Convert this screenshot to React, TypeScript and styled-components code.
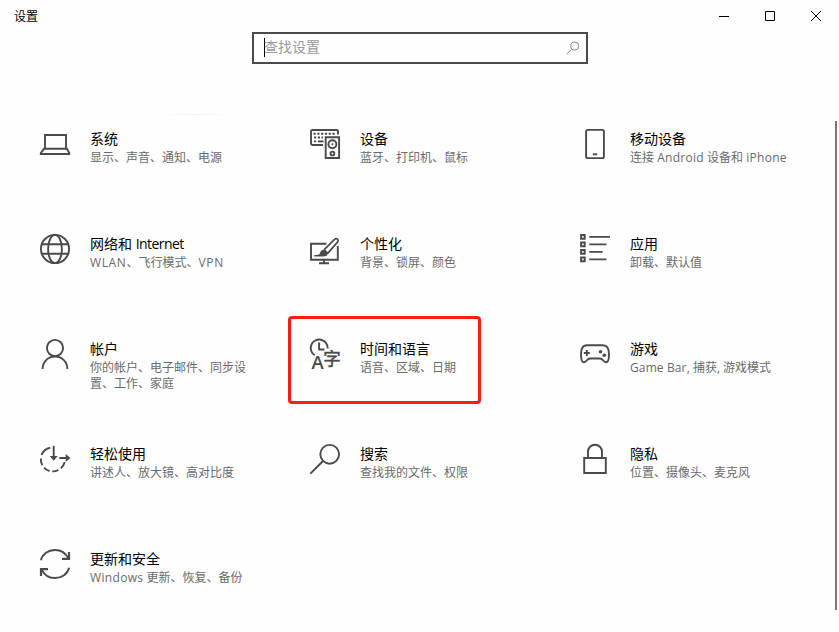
import React from "react";
import styled, { createGlobalStyle } from "styled-components";

const GlobalStyle = createGlobalStyle`
  * { box-sizing: border-box; }
  body { margin: 0; background: #fefefe; }
`;

const Window = styled.div`
  width: 839px;
  height: 632px;
  display: flex;
  flex-direction: column;
  overflow: hidden;
  background: #fefefe;
  color: #000;
  font-family: "Open Sans", "Noto Sans CJK SC", sans-serif;
`;

const TitleBar = styled.header`
  height: 32px;
  flex: none;
  display: flex;
  justify-content: space-between;
  padding-left: 14px;
`;

const WindowTitle = styled.h1`
  margin: 0;
  font-size: 12px;
  font-weight: 400;
  line-height: 33px;
`;

const Controls = styled.div`
  display: flex;
`;

const ControlButton = styled.button`
  width: 46px;
  height: 32px;
  border: 0;
  padding: 0;
  background: none;
  display: grid;
  place-items: center;
`;

const SearchBox = styled.label`
  width: 336px;
  height: 32px;
  flex: none;
  margin-left: 252px;
  border: 2px solid #4c4a48;
  padding: 0 6px 0 10px;
  display: flex;
  align-items: center;
`;

const Caret = styled.span`
  width: 1px;
  height: 19px;
  margin: 0 -1px 2px 0;
  background: #000;
`;

const Placeholder = styled.span`
  flex: 1;
  font-size: 14px;
  line-height: 20px;
  padding-bottom: 3px;
  color: #999;
`;

const FadeLine = styled.div`
  width: 70px;
  height: 1px;
  flex: none;
  margin: 50px 0 0 160px;
  background: linear-gradient(to right, transparent, #f0f0f0, transparent);
`;

const Content = styled.main`
  flex: 1;
  min-height: 0;
  display: flex;
  justify-content: space-between;
  padding: 6px 2px 0 39px;
`;

const CategoryGrid = styled.div`
  display: grid;
  grid-template-columns: repeat(3, 270px);
  grid-auto-rows: 105px;
  width: 796px;
  padding-top: 7px;
`;

const ScrollThumb = styled.div`
  width: 2px;
  height: 489px;
  flex: none;
  background: #767676;
`;

const Card = styled.section`
  position: relative;
  display: flex;
  gap: 19px;
  align-items: flex-start;
`;

const Highlight = styled.div`
  position: absolute;
  left: -21px;
  top: -22px;
  width: 193px;
  height: 88px;
  border: 3px solid #ff1c12;
  border-radius: 4px;
`;

const IconFrame = styled.svg`
  width: 32px;
  height: 32px;
  flex: none;
  overflow: visible;
  fill: none;
  stroke: #4a4a4a;
  stroke-width: 1.9;
`;

const CardText = styled.div`
  width: 162px;
  padding-top: 1px;
`;

const CardTitle = styled.h2`
  margin: 0;
  font-size: 14px;
  line-height: 20px;
  font-weight: 400;
  white-space: nowrap;
`;

const Description = styled.p`
  margin: 1px 0 0;
  font-size: 12px;
  line-height: 16px;
  color: #6a6a6a;
`;

const Latin = styled.span<{ $track: number }>`
  letter-spacing: ${(p) => p.$track}px;
`;

const GlyphText = styled.text<{ $size: number; $weight: number; $outline: number }>`
  font-family: "Open Sans", "Noto Sans CJK SC", sans-serif;
  font-size: ${(p) => p.$size}px;
  font-weight: ${(p) => p.$weight};
  fill: #4a4a4a;
  stroke-width: ${(p) => p.$outline}px;
`;

const icons: Record<string, React.ReactNode> = {
  system: (
    <path d="M6 20.5V7h21v13.5M5 20.8h23l2.2 4.2v1H1.8v-1z" />
  ),
  devices: (
    <>
      <path d="M29 6.5V3.5A1.5 1.5 0 0 0 27.5 2h-24A1.5 1.5 0 0 0 2 3.5v12A1.5 1.5 0 0 0 3.5 17H14" />
      <path d="M4.5 5.8H27M5 9.5h9M5 13.4h2.5" strokeDasharray="2.2 1.6" />
      <path d="M9 13.4h5.5" />
      <path d="M16.7 9.3h13.4V30H16.700z" />
      <circle cx="23.4" cy="16.3" r="4" />
      <circle cx="23.4" cy="16.3" r="1" fill="#4a4a4a" stroke="none" />
      <circle cx="23.4" cy="25.5" r="1.9" />
    </>
  ),
  phone: (
    <>
      <rect x="7.1" y="1.9" width="17.8" height="28.2" rx="1.6" />
      <path d="M13.8 26.3h4.4" />
    </>
  ),
  network: (
    <>
      <circle cx="16" cy="16" r="14.1" />
      <ellipse cx="16" cy="16" rx="6.9" ry="14.1" />
      <path d="M2.7 11.3h26.600M2.7 20.7h26.600" />
    </>
  ),
  personal: (
    <>
      <path d="M17.5 10.7H2v16h26.800V13M15 27v3M10 30.200h10" />
      <path d="M15 16.800L25.800 6.200c1.800-1.600 4.400.800 2.900 2.700L18.700 20.400M15 16.800l3.700 3.600" strokeWidth="1.7" />
      <path d="M15.300 16.800c-2.500 0-3.800 1.200-4.200 3.200-.3 1.400-1.600 2-5.800 2v1.500h8.600c3 0 4.900-1 5-3.400z" fill="#4a4a4a" stroke="none" />
    </>
  ),
  apps: (
    <>
      <path d="M2.100 2.100h3.600v3.600H2.100zM2.100 9.600h3.600v3.600H2.100zM2.100 17.100h3.600v3.600H2.100zM2.100 24.600h3.600v3.600H2.100z" strokeWidth="2" />
      <path d="M10.300 3.900H31M10.300 11.400h17.200M10.300 18.900h13.400M10.300 26.400h17.200" />
    </>
  ),
  accounts: (
    <>
      <circle cx="16" cy="10" r="8.1" />
      <path d="M3.600 31c0-7.200 5.400-12.500 12.400-12.500S28.400 23.800 28.400 31" />
    </>
  ),
  time: (
    <>
      <path d="M5.800 17.300A8.500 8.500 0 1 1 18.700 10.500" />
      <path d="M10.100 4.500v7h5.400" />
      <GlyphText $size={18.500} $weight={600} $outline={0} x="2.600" y="31">A</GlyphText>
      <GlyphText $size={17.500} $weight={400} $outline={0.500} x="14.200" y="27">字</GlyphText>
    </>
  ),
  gaming: (
    <>
      <path d="M8 7.300h16c4.400 0 6 3.300 6 9.200 0 5.200-.8 7.800-3 7.800-2.700 0-2.800-3.800-6-3.800H11c-3.200 0-3.300 3.800-6 3.800-2.200 0-3-2.600-3-7.800 0-5.900 1.600-9.200 6-9.200z" />
      <path d="M4.800 15h6M7.800 12v6" />
      <circle cx="21.5" cy="13.8" r="1.8" fill="#4a4a4a" stroke="none" />
      <circle cx="25.3" cy="17.3" r="1.8" fill="#4a4a4a" stroke="none" />
    </>
  ),
  ease: (
    <>
      <path d="M11.200 4.700A12.300 12.300 0 0 0 2.500 11.800M1.900 15.500A12.300 12.300 0 0 0 3.300 22.300M5 24.600A12.300 12.300 0 0 0 10.500 28M13.300 28.400A12.300 12.300 0 0 0 19.500 27M21.800 25.300A12.300 12.300 0 0 0 25.700 19" />
      <path d="M14.700 2.700v13M20.300 15h9" />
      <path d="M10.700 12.900l4 4.800 4-4.800zM26.700 11l4.700 4-4.700 4z" fill="#4a4a4a" stroke="none" />
    </>
  ),
  search: (
    <>
      <circle cx="20.7" cy="11.3" r="9.4" />
      <path d="M14 18L1.400 30.600" />
    </>
  ),
  privacy: (
    <>
      <path d="M5.200 15h21.600v15H5.200z" />
      <path d="M9 15V8.700a7 7 0 0 1 14 0V15" />
    </>
  ),
  update: (
    <>
      <path d="M1.900 12.300C3.500 6 9.200 2 15.800 2c6 0 11.200 3.400 13.600 8.700" />
      <path d="M30 4v6.800h-7" strokeWidth="2.2" />
      <path d="M30.100 19.700C28.500 26 22.800 30 16.200 30 10.200 30 5 26.600 2.600 21.300" />
      <path d="M2 28v-6.800h7" strokeWidth="2.2" />
    </>
  ),
};

interface Category {
  icon: string;
  title: React.ReactNode;
  description: React.ReactNode;
  highlighted?: boolean;
}

const categories: Category[] = [
  { icon: "system", title: "系统", description: "显示、声音、通知、电源" },
  { icon: "devices", title: "设备", description: "蓝牙、打印机、鼠标" },
  {
    icon: "phone",
    title: "移动设备",
    description: <>连接 <Latin $track={0.28}>Android</Latin> 设备和 <Latin $track={0.3}>iPhone</Latin></>,
  },
  {
    icon: "network",
    title: <>网络和 <Latin $track={-0.55}>Internet</Latin></>,
    description: <><Latin $track={0.6}>WLAN</Latin>、飞行模式、<Latin $track={0.7}>VPN</Latin></>,
  },
  { icon: "personal", title: "个性化", description: "背景、锁屏、颜色" },
  { icon: "apps", title: "应用", description: "卸载、默认值" },
  { icon: "accounts", title: "帐户", description: "你的帐户、电子邮件、同步设置、工作、家庭" },
  { icon: "time", title: "时间和语言", description: "语音、区域、日期", highlighted: true },
  {
    icon: "gaming",
    title: "游戏",
    description: <><Latin $track={0.12}>Game Bar</Latin>, 捕获, 游戏模式</>,
  },
  { icon: "ease", title: "轻松使用", description: "讲述人、放大镜、高对比度" },
  { icon: "search", title: "搜索", description: "查找我的文件、权限" },
  { icon: "privacy", title: "隐私", description: "位置、摄像头、麦克风" },
  {
    icon: "update",
    title: "更新和安全",
    description: <><Latin $track={0.33}>Windows</Latin> 更新、恢复、备份</>,
  },
];

export default function App() {
  return (
    <Window>
      <GlobalStyle />
      <TitleBar>
        <WindowTitle>设置</WindowTitle>
        <Controls>
          <ControlButton aria-label="最小化">
            <svg width="10" height="10" stroke="#000"><path d="M0 5.5h10" /></svg>
          </ControlButton>
          <ControlButton aria-label="最大化">
            <svg width="10" height="10" stroke="#000" fill="none"><path d="M.5.5h9v9h-9z" /></svg>
          </ControlButton>
          <ControlButton aria-label="关闭">
            <svg width="10" height="10" stroke="#000"><path d="M0 0l10 10M10 0L0 10" /></svg>
          </ControlButton>
        </Controls>
      </TitleBar>
      <SearchBox>
        <Caret />
        <Placeholder>查找设置</Placeholder>
        <svg width="14" height="14" fill="none" stroke="#8a8a8a" strokeWidth="1">
          <circle cx="8.8" cy="5" r="4" />
          <path d="M6 7.8L.7 13.1" />
        </svg>
      </SearchBox>
      <FadeLine />
      <Content>
        <CategoryGrid>
          {categories.map((c) => (
            <Card key={c.icon}>
              {c.highlighted && <Highlight />}
              <IconFrame viewBox="0 0 32 32">{icons[c.icon]}</IconFrame>
              <CardText>
                <CardTitle>{c.title}</CardTitle>
                <Description>{c.description}</Description>
              </CardText>
            </Card>
          ))}
        </CategoryGrid>
        <ScrollThumb />
      </Content>
    </Window>
  );
}
